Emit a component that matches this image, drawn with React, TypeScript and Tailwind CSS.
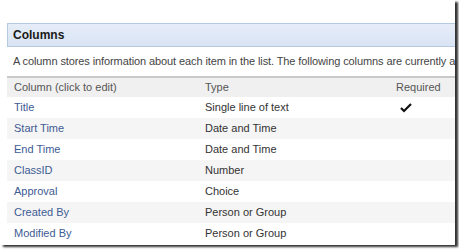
import React from "react";

const rows: [string, string, boolean][] = [
  ["Title", "Single line of text", true],
  ["Start Time", "Date and Time", false],
  ["End Time", "Date and Time", false],
  ["ClassID", "Number", false],
  ["Approval", "Choice", false],
  ["Created By", "Person or Group", false],
  ["Modified By", "Person or Group", false],
];

export default function App() {
  return (
    <div
      className="w-[459px] h-[251px] bg-white overflow-hidden relative"
      style={{ fontFamily: "'Liberation Sans', Arial, sans-serif" }}
    >
      <div className="w-[455px] h-[245px] bg-white shadow-[3px_2px_2px_#333] flex flex-col overflow-hidden">
        <div className="h-[23px]" />
        <div className="ml-[7px] h-[24px] bg-gradient-to-b from-[#e6edf8] to-[#d9e4f4] border-t border-b border-l border-[#b7c8e2] flex items-center pl-[5px]">
          <span className="text-[12px] font-bold text-[#1a1a1a]">Columns</span>
        </div>
        <div className="h-[29px] flex items-center pl-[13px] text-[11px] tracking-[-0.1px] text-[#444] whitespace-nowrap">
          A column stores information about each item in the list. The following columns are currently a
        </div>
        <div className="ml-[7px] flex flex-col text-[11px]">
          <div className="h-[21px] bg-[#f0f0f0] border-t-2 border-[#c9c9c9] flex items-center text-[#555]">
            <div className="w-[191px] pl-[7px]">Column (click to edit)</div>
            <div className="w-[191px] pl-[7px]">Type</div>
            <div className="pl-[7px]">Required</div>
          </div>
          {rows.map(([name, type, req], i) => (
            <div
              key={name}
              className={`h-[21px] flex items-center ${i % 2 === 1 ? "bg-[#f5f5f5]" : "bg-white"}`}
            >
              <div className="w-[191px] pl-[7px] text-[#3d5b94]">{name}</div>
              <div className="w-[191px] pl-[7px] text-[#333]">{type}</div>
              <div className="pl-[11px] text-[#222]">
                {req ? (
                  <svg width="12" height="10" viewBox="0 0 12 10">
                    <path d="M1 5 L4 8 L11 1" stroke="#111" strokeWidth="2.2" fill="none" />
                  </svg>
                ) : null}
              </div>
            </div>
          ))}
        </div>
      </div>
    </div>
  );
}
